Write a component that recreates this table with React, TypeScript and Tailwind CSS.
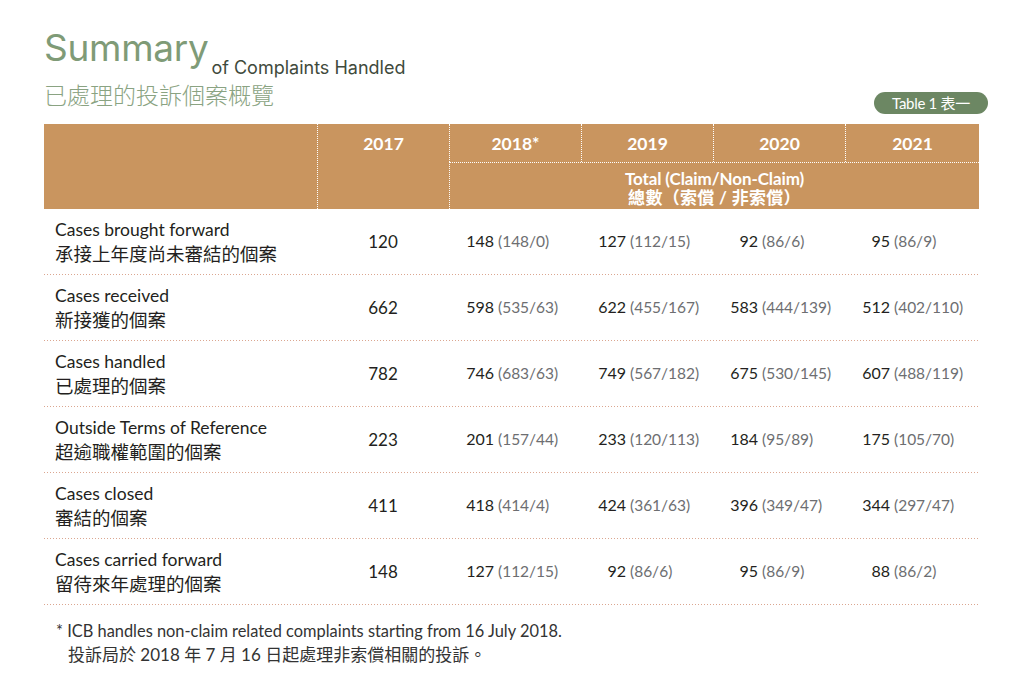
import React from "react";

const rows = [
  { en: "Cases brought forward", zh: "承接上年度尚未審結的個案", y17: "120", vals: [["148", "148/0"], ["127", "112/15"], ["92", "86/6"], ["95", "86/9"]] },
  { en: "Cases received", zh: "新接獲的個案", y17: "662", vals: [["598", "535/63"], ["622", "455/167"], ["583", "444/139"], ["512", "402/110"]] },
  { en: "Cases handled", zh: "已處理的個案", y17: "782", vals: [["746", "683/63"], ["749", "567/182"], ["675", "530/145"], ["607", "488/119"]] },
  { en: "Outside Terms of Reference", zh: "超逾職權範圍的個案", y17: "223", vals: [["201", "157/44"], ["233", "120/113"], ["184", "95/89"], ["175", "105/70"]] },
  { en: "Cases closed", zh: "審結的個案", y17: "411", vals: [["418", "414/4"], ["424", "361/63"], ["396", "349/47"], ["344", "297/47"]] },
  { en: "Cases carried forward", zh: "留待來年處理的個案", y17: "148", vals: [["127", "112/15"], ["92", "86/6"], ["95", "86/9"], ["88", "86/2"]] },
];

const font = "font-['Lato','Noto_Sans_CJK_TC',sans-serif]";

function Divider() {
  return <div className="h-px w-full bg-[linear-gradient(to_right,#dba690_1px,transparent_1px)] bg-[length:3px_1px] bg-repeat-x" />;
}

export default function App() {
  return (
    <div className={`w-[1024px] h-[678px] bg-white ${font} text-[#231f20] overflow-hidden`}>
      <div className="flex h-[124px] justify-between pl-[44px] pr-[36px]">
        <div className="pt-[28px]">
          <div className="flex items-end">
            <span className="font-['Inter','Noto_Sans',sans-serif] font-normal text-[37px] leading-[40px] tracking-[-0.3px] text-[#7f9b77]">Summary</span>
            <span className="ml-[3px] mb-[-10px] font-['Inter','Noto_Sans',sans-serif] text-[18px] leading-[20px] text-[#3f4a3c]">of Complaints Handled</span>
          </div>
          <div className="mt-[13px] font-['Noto_Sans_CJK_TC',sans-serif] font-light text-[23px] leading-[26px] text-[#8aa382]">已處理的投訴個案概覽</div>
        </div>
        <div className="self-end mb-[10px] h-[22px] w-[114px] rounded-full bg-[#6c8763] flex items-center justify-center text-white text-[15px] font-['Liberation_Sans_Narrow','Lato','Noto_Sans_CJK_TC',sans-serif] tracking-[-0.3px]">
          Table 1 表一
        </div>
      </div>

      <div className="ml-[44px] w-[935px]">
        <div className="grid grid-cols-[273px_132px_132px_132px_132px_134px] grid-rows-[38px_47px] bg-[#c9955f] text-white font-bold">
          <div className="row-span-2" />
          <div className="row-span-2 border-l border-dotted border-white flex items-start justify-center pt-[8px] text-[17.5px] leading-[24px]">2017</div>
          <div className="border-l border-dotted border-white flex items-center justify-center pt-[2px] text-[17.5px]">2018*</div>
          <div className="border-l border-dotted border-white flex items-center justify-center pt-[2px] text-[17.5px]">2019</div>
          <div className="border-l border-dotted border-white flex items-center justify-center pt-[2px] text-[17.5px]">2020</div>
          <div className="border-l border-dotted border-white flex items-center justify-center pt-[2px] text-[17.5px]">2021</div>
          <div className="col-span-4 border-l border-t border-dotted border-white flex flex-col items-center justify-center pt-[5px]">
            <div className="text-[17px] leading-[18px] tracking-[-0.1px]">Total (Claim/Non-Claim)</div>
            <div className="text-[17px] leading-[19px] tracking-[0.3px]">總數（索償 / 非索償）</div>
          </div>
        </div>

        {rows.map((r) => (
          <div key={r.en}>
            <div className="grid grid-cols-[273px_132px_132px_132px_132px_134px] h-[65px] items-center">
              <div className="pl-[11px] flex flex-col">
                <span className="text-[17.5px] leading-[24px]">{r.en}</span>
                <span className="text-[18.5px] leading-[24px]">{r.zh}</span>
              </div>
              <div className="text-center text-[17px]">{r.y17}</div>
              {r.vals.map(([a, b], i) => (
                <div key={i} className="flex items-baseline whitespace-nowrap">
                  <span className="w-[45px] text-right text-[16px] text-[#231f20]">{a}</span>
                  <span className="ml-[4px] text-[#6d6e71] text-[15.5px]">({b})</span>
                </div>
              ))}
            </div>
            <Divider />
          </div>
        ))}

        <div className="mt-[14px] pl-[12px] text-[16.4px] leading-[24px] text-[#333]">
          <div>* ICB handles non-claim related complaints starting from 16 July 2018.</div>
          <div className="pl-[12px] text-[17px]">投訴局於 2018 年 7 月 16 日起處理非索償相關的投訴。</div>
        </div>
      </div>
    </div>
  );
}
